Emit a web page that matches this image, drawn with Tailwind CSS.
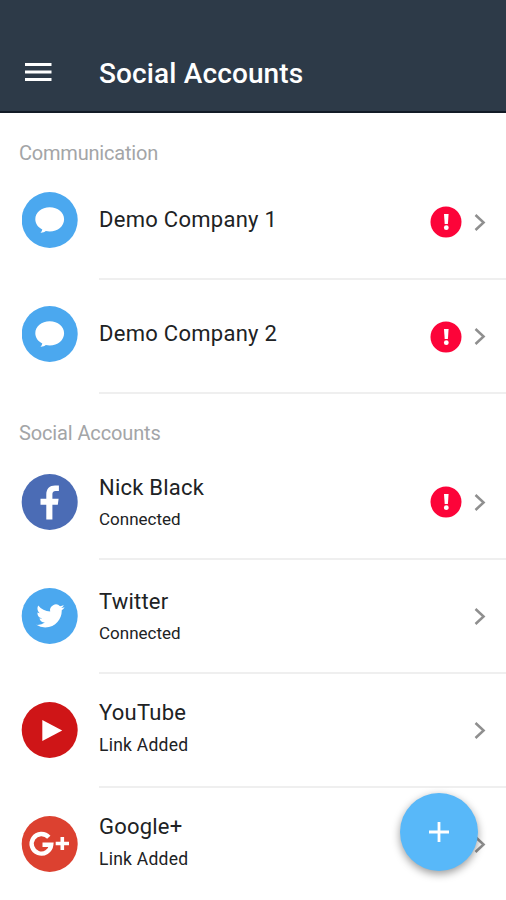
<!DOCTYPE html>
<html lang="en">
<head>
<meta charset="utf-8">
<title>Social Accounts</title>
<script src="https://cdn.jsdelivr.net/npm/@tailwindcss/browser@4"></script>
</head>
<body class="w-[506px] h-[900px] overflow-hidden bg-white font-['Roboto',sans-serif] text-[#202224]">
<svg class="hidden">
  <symbol id="alert" viewBox="0 0 32 32"><circle cx="16" cy="16" r="15.500" fill="#fc0439"/><path d="M14 8h4.600l-.7 10h-3.200z" fill="#fff"/><circle cx="16.300" cy="21.700" r="2.400" fill="#fff"/></symbol>
  <symbol id="chevron" viewBox="0 0 12 18"><path d="M1.500 1 9.600 8.500l-8.100 7.500" fill="none" stroke="#8f8f8f" stroke-width="2.500"/></symbol>
  <symbol id="chat" viewBox="0 0 56 56"><circle cx="27.700" cy="28" r="28" fill="#4ba8ef"/><path d="M27.700 15.300c8.200 0 14.400 5.100 14.400 12 0 7-6.200 12.200-14.400 12.200-1.400 0-2.700-.1-3.900-.4-1.300 1-3.200 1.700-5.300 1.600 1-.8 1.600-1.900 1.800-3.200-4.300-2.200-7-5.900-7-10.200 0-6.900 6.200-12 14.400-12z" fill="#fff"/></symbol>
</svg>
<header class="h-[113px] bg-[#2d3a48] border-b-2 border-[#121b26] flex items-end pb-[20px] pl-[25px]">
  <svg class="w-[27px] h-[38px] shrink-0" viewBox="0 0 27 38" fill="#fff"><path d="M0 10h26.500v3H0zM0 17.500h26.500v3H0zM0 25h26.500v3H0z"/></svg>
  <h1 class="ml-[47px] text-[28px] leading-[34px] tracking-[0.13px] font-medium text-white whitespace-nowrap">Social Accounts</h1>
</header>
<main>
  <h2 class="h-[52px] pl-[19px] pt-[28px] text-[20px] leading-[24px] tracking-[-0.2px] text-[#a3a5a7]">Communication</h2>
  <section>
    <div class="h-[115px] flex pl-[22px]">
      <svg class="w-[56px] h-[56px] mt-[27px] shrink-0 overflow-visible"><use href="#chat"/></svg>
      <div class="ml-[21px] flex-1 flex border-b-2 border-[#efefef]">
        <p class="flex-1 pt-[41px] text-[22px] leading-[28px] tracking-[0.28px]">Demo Company 1</p>
        <svg class="w-[32px] h-[32px] mt-[41px] mr-[12px]"><use href="#alert"/></svg>
        <svg class="w-[12px] h-[18px] mt-[49px] mr-[20px]"><use href="#chevron"/></svg>
      </div>
    </div>
    <div class="h-[114px] flex pl-[22px]">
      <svg class="w-[56px] h-[56px] mt-[26px] shrink-0 overflow-visible"><use href="#chat"/></svg>
      <div class="ml-[21px] flex-1 flex border-b-2 border-[#efefef]">
        <p class="flex-1 pt-[40px] text-[22px] leading-[28px] tracking-[0.28px]">Demo Company 2</p>
        <svg class="w-[32px] h-[32px] mt-[41px] mr-[12px]"><use href="#alert"/></svg>
        <svg class="w-[12px] h-[18px] mt-[48px] mr-[20px]"><use href="#chevron"/></svg>
      </div>
    </div>
  </section>
  <h2 class="h-[52px] pl-[19px] pt-[27px] text-[20px] leading-[24px] tracking-[-0.13px] text-[#a3a5a7]">Social Accounts</h2>
  <section>
    <div class="h-[114px] flex pl-[22px]">
      <svg class="w-[56px] h-[56px] mt-[28px] shrink-0 overflow-visible" viewBox="0 0 56 56"><circle cx="27.700" cy="28" r="28" fill="#4b6cb5"/><path transform="translate(-.7 0)" d="M25 45.500V30.700h-5.800v-5.900H25v-4.400c0-5.800 3.400-9 8.700-9 1.500 0 2.800.1 3.900.2v5.300h-3.200c-2.600 0-3.300 1.300-3.300 3.400v4.500h6.200l-.8 5.900h-5.400v14.800z" fill="#fff"/></svg>
      <div class="ml-[21px] flex-1 flex border-b-2 border-[#efefef]">
        <div class="flex-1 pt-[28px]"><p class="text-[22px] leading-[28px] tracking-[0.22px]">Nick Black</p><p class="mt-[6px] text-[17px] leading-[22px]">Connected</p></div>
        <svg class="w-[32px] h-[32px] mt-[40px] mr-[12px]"><use href="#alert"/></svg>
        <svg class="w-[12px] h-[18px] mt-[48px] mr-[20px]"><use href="#chevron"/></svg>
      </div>
    </div>
    <div class="h-[114px] flex pl-[22px]">
      <svg class="w-[56px] h-[56px] mt-[28px] shrink-0 overflow-visible" viewBox="0 0 56 56"><circle cx="27.700" cy="28" r="28" fill="#4ba8ef"/><path transform="translate(14.300 13.800) scale(1.180)" d="M23.953 4.570a10 10 0 01-2.825.775 4.958 4.958 0 002.163-2.723c-.951.555-2.005.959-3.127 1.184a4.920 4.920 0 00-8.384 4.482C7.690 8.095 4.067 6.130 1.640 3.162a4.822 4.822 0 00-.666 2.475c0 1.710.87 3.213 2.188 4.096a4.904 4.904 0 01-2.228-.616v.06a4.923 4.923 0 003.946 4.827 4.996 4.996 0 01-2.212.085 4.936 4.936 0 004.604 3.417 9.867 9.867 0 01-6.102 2.105c-.39 0-.779-.023-1.170-.067a13.995 13.995 0 007.557 2.209c9.053 0 13.998-7.496 13.998-13.985 0-.21 0-.42-.015-.63A9.935 9.935 0 0024 4.590z" fill="#fff"/></svg>
      <div class="ml-[21px] flex-1 flex border-b-2 border-[#efefef]">
        <div class="flex-1 pt-[28px]"><p class="text-[22px] leading-[28px] tracking-[0.2px]">Twitter</p><p class="mt-[6px] text-[17px] leading-[22px]">Connected</p></div>
        <svg class="w-[12px] h-[18px] mt-[48px] mr-[20px]"><use href="#chevron"/></svg>
      </div>
    </div>
    <div class="h-[114px] flex pl-[22px]">
      <svg class="w-[56px] h-[56px] mt-[28px] shrink-0 overflow-visible" viewBox="0 0 56 56"><circle cx="27.700" cy="28" r="28" fill="#cf1517"/><path d="M20.300 18v21L40.200 28.500z" fill="#fff"/></svg>
      <div class="ml-[21px] flex-1 flex border-b-2 border-[#efefef]">
        <div class="flex-1 pt-[25px]"><p class="text-[22px] leading-[28px] tracking-[0.25px]">YouTube</p><p class="mt-[7px] text-[17.500px] leading-[22px] tracking-[0.25px]">Link Added</p></div>
        <svg class="w-[12px] h-[18px] mt-[48px] mr-[20px]"><use href="#chevron"/></svg>
      </div>
    </div>
    <div class="h-[112px] flex pl-[22px]">
      <svg class="w-[56px] h-[56px] mt-[28px] shrink-0 overflow-visible" viewBox="0 0 56 56"><circle cx="27.700" cy="28" r="28" fill="#dc4130"/><path d="M26.800 21.300A9.800 9.800 0 1 0 29.200 28.800H20.500" fill="none" stroke="#fff" stroke-width="4.400"/><path d="M33.700 27.500h13.300M40.300 21v13" fill="none" stroke="#fff" stroke-width="3.600"/></svg>
      <div class="ml-[21px] flex-1 flex">
        <div class="flex-1 pt-[25px]"><p class="text-[22px] leading-[28px] tracking-[0.2px]">Google+</p><p class="mt-[7px] text-[17.500px] leading-[22px] tracking-[0.25px]">Link Added</p></div>
        <svg class="w-[12px] h-[18px] mt-[48px] mr-[20px]"><use href="#chevron"/></svg>
      </div>
    </div>
  </section>
</main>
<button class="absolute left-[400px] top-[793px] w-[78px] h-[78px] rounded-full bg-[#58b8f9] shadow-[0_3px_8px_rgba(0,0,0,0.4)] flex items-center justify-center" aria-label="Add">
  <svg class="w-[20px] h-[20px]" viewBox="0 0 20 20"><path d="M10 0v20M0 10h20" stroke="#fff" stroke-width="2.800"/></svg>
</button>
</body>
</html>
